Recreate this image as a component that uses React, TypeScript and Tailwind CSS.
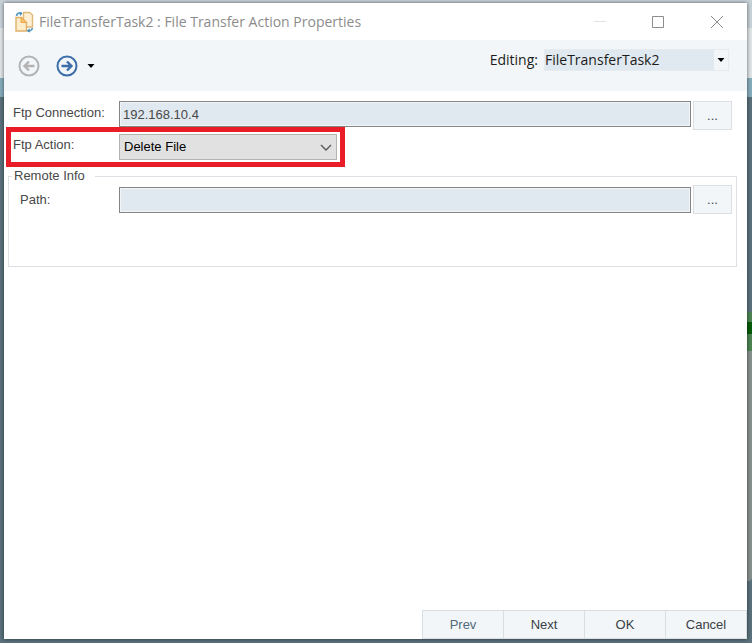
import { useState } from 'react'
import type { ReactNode } from 'react'
import clsx from 'clsx'

const ACTIONS = ['Delete File', 'Download File', 'Upload File', 'Rename File']
const TASKS = ['FileTransferTask2']

function TransferIcon() {
  return (
    <svg viewBox="0 0 20 22" className="h-[22px] w-5 shrink-0" fill="none" aria-hidden="true">
      <path d="M2.500 5C3 2.500 5 1.500 7.500 2" stroke="#5a9fc4" strokeWidth="1.800" />
      <path d="M5.500 1 8.500 2.500 6 5z" fill="#4a8fb8" />
      <path d="M9.500 1.500h6l3 2.500v12h-9z" fill="#fdf0d5" stroke="#e0b878" strokeWidth="1.400" />
      <path d="M2 6.500h5.500l5 5v8.500H2z" fill="#fdedcb" stroke="#e0b06a" strokeWidth="1.400" />
      <path d="M7 6.500v5h5.500z" fill="#f7c274" stroke="#eea544" />
      <path d="M14 20c2.500 0 4-.8 4.300-3" stroke="#5a9fc4" strokeWidth="1.800" />
      <path d="M15.500 17.500 12.500 20l3.500 1.500z" fill="#4a8fb8" />
    </svg>
  )
}

function ArrowCircle({ back }: { back?: boolean }) {
  return (
    <svg viewBox="0 0 22 22" className="size-[22px]" fill="none" stroke="currentColor" aria-hidden="true">
      <circle cx="11" cy="11" r="9.500" strokeWidth="2" />
      <path
        d={back ? 'M16.500 11H7M11 6.500 6.500 11l4.500 4.500' : 'M5.500 11H15M11 6.500 15.500 11 11 15.500'}
        strokeWidth="2.400"
      />
    </svg>
  )
}

function Caret() {
  return (
    <svg viewBox="0 0 8 4" className="h-1 w-2" aria-hidden="true">
      <path d="M.5 0h7L4 4z" fill="#000" />
    </svg>
  )
}

function TitleBar() {
  return (
    <header className="flex h-[37px] items-center bg-white pl-[10px] text-[#8c8c8c]">
      <TransferIcon />
      <h1 className="ml-[5px] min-w-0 flex-1 truncate font-['Open_Sans',sans-serif] text-[14px]">
        FileTransferTask2 : File Transfer Action Properties
      </h1>
      <button type="button" aria-label="Minimize" className="flex h-full w-[58px] items-center justify-center text-[#e2e2e2]">
        <svg viewBox="0 0 12 12" className="size-3" stroke="currentColor" aria-hidden="true">
          <path d="M0 5.500h12" />
        </svg>
      </button>
      <button type="button" aria-label="Maximize" className="flex h-full w-[58px] items-center justify-center">
        <svg viewBox="0 0 12 12" className="size-3" fill="none" stroke="currentColor" aria-hidden="true">
          <path d="M.5 .5h11v11H.5z" />
        </svg>
      </button>
      <button type="button" aria-label="Close" className="flex h-full w-[60px] items-center justify-center">
        <svg viewBox="0 0 12 12" className="size-3" stroke="currentColor" aria-hidden="true">
          <path d="m0 0 12 12M12 0 0 12" />
        </svg>
      </button>
    </header>
  )
}

function Toolbar() {
  return (
    <div className="flex h-[51px] items-center bg-[#f2f6f9] pr-[18px] pl-[14px]">
      <button type="button" disabled aria-label="Back" className="text-[#b3b3b3]">
        <ArrowCircle back />
      </button>
      <button type="button" aria-label="Forward" className="ml-4 text-[#3d6ea8]">
        <ArrowCircle />
      </button>
      <button type="button" aria-label="History" className="ml-[9px] flex h-5 items-center">
        <Caret />
      </button>
      <div className="mb-3 ml-auto flex items-center font-['Open_Sans',sans-serif] text-[14px] text-[#1c1c1c]">
        <label htmlFor="editing">Editing:</label>
        <div className="relative ml-[6px]">
          <select
            id="editing"
            className="block h-[22px] w-[185px] appearance-none border border-[#e6ebf0] bg-[#e1e9f0] leading-5"
          >
            {TASKS.map((t) => (
              <option key={t}>{t}</option>
            ))}
          </select>
          <span className="pointer-events-none absolute inset-y-px right-px flex w-[14px] items-center justify-center bg-[#f2f6f9]">
            <Caret />
          </span>
        </div>
      </div>
    </div>
  )
}

type BrowseFieldProps = { id: string; label: string; defaultValue?: string; nested?: boolean }

function BrowseField({ id, label, defaultValue, nested }: BrowseFieldProps) {
  return (
    <div className={clsx('flex', nested ? 'items-center' : 'items-start')}>
      <label htmlFor={id} className={clsx('shrink-0 leading-6', nested ? 'w-[99px]' : 'w-[106px]')}>
        {label}
      </label>
      <input
        id={id}
        defaultValue={defaultValue}
        className="h-[26px] min-w-0 flex-1 border border-[#858585] bg-[#e1e9f0] px-[3px] ring-1 ring-[#f2f5f8] outline-none ring-inset"
      />
      <button
        type="button"
        aria-label={`Browse ${label}`}
        className="ml-[2px] h-[29px] w-[39px] border border-[#dce0e4] bg-[#f2f6f9]"
      >
        ...
      </button>
    </div>
  )
}

function FooterButton({ muted, children }: { muted?: boolean; children: ReactNode }) {
  return (
    <button
      type="button"
      className={clsx(
        'h-[29px] w-[82px] border border-[#d9dee2] bg-[#f2f6f9] not-first:-ml-px',
        muted ? 'text-[#52697a]' : 'text-[#3a3f45]',
      )}
    >
      {children}
    </button>
  )
}

export default function App() {
  const [action, setAction] = useState(ACTIONS[0])

  return (
    <div className="relative flex min-h-screen flex-col overflow-hidden bg-[#5b727c] px-1 pt-[3px] pb-1 font-['Liberation_Sans',Arial,sans-serif] text-[13px] text-[#484848]">
      {/* desktop behind the dialog */}
      <div className="absolute inset-x-0 top-0" aria-hidden="true">
        <div className="h-7 bg-[#c8d2d9]" />
        <div className="h-[50px] bg-[#e0e5e8]" />
        <div className="h-[19px] bg-[#86adbd]" />
      </div>
      <div className="absolute top-[312px] right-0 h-[39px] w-2 bg-[#4d8553]" aria-hidden="true">
        <div className="mt-[10px] h-3 bg-[#055c0b]" />
      </div>
      <div className="absolute top-[351px] right-0 h-[230px] w-2 rounded-br bg-[#87928f]" aria-hidden="true" />

      <div className="relative mr-px flex flex-1 flex-col bg-white shadow-[0_0_4px_#00000090]">
        <TitleBar />
        <Toolbar />
        <main className="flex-1 pt-[10px]">
          <div className="pr-[15px] pl-[9px]">
            <BrowseField id="connection" label="Ftp Connection:" defaultValue="192.168.10.4" />
          </div>
          <div className="-mt-[3px] ml-[2px] flex h-10 w-[339px] border-[5px] border-[#e91d27] pl-[2px]">
            <label htmlFor="action" className="w-[106px] shrink-0 leading-[26px]">
              Ftp Action:
            </label>
            <div className="relative mt-[2px] h-[26px] w-[218px]">
              <select
                id="action"
                value={action}
                onChange={(e) => setAction(e.target.value)}
                className="h-full w-full appearance-none border border-[#b4b4b4] bg-[#e1e1e1] px-1 text-black"
              >
                {ACTIONS.map((a) => (
                  <option key={a}>{a}</option>
                ))}
              </select>
              <svg
                viewBox="0 0 12 7"
                className="pointer-events-none absolute top-[10px] right-[5px] h-[7px] w-3"
                fill="none"
                stroke="#555"
                strokeWidth="1.300"
                aria-hidden="true"
              >
                <path d="m1 1 5 5 5-5" />
              </svg>
            </div>
          </div>
          <fieldset className="mr-[10px] ml-1 h-[100px] border border-[#dce0e4] pr-1 pl-[11px]">
            <legend className="-ml-2 pr-[10px] pl-[2px] leading-[18px]">Remote Info</legend>
            <BrowseField id="path" label="Path:" nested />
          </fieldset>
        </main>
        <footer className="flex justify-end">
          <FooterButton muted>Prev</FooterButton>
          <FooterButton>Next</FooterButton>
          <FooterButton>OK</FooterButton>
          <FooterButton>Cancel</FooterButton>
        </footer>
      </div>
    </div>
  )
}
